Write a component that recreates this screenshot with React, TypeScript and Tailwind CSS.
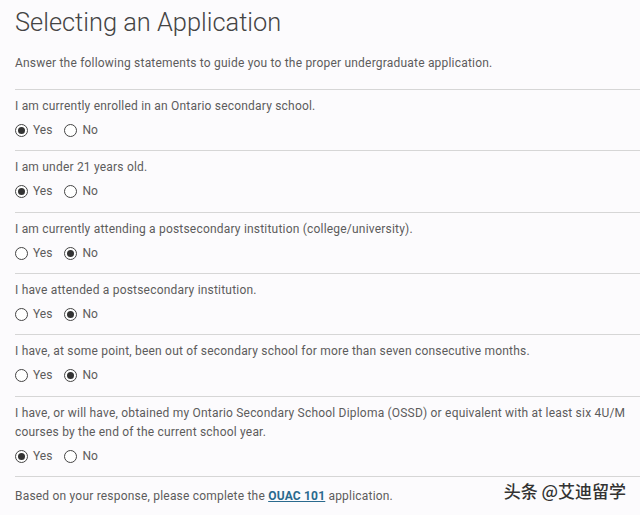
import React, { useState } from 'react'

interface Question {
  id: string
  lines: string[]
  answer: 'yes' | 'no'
  tall?: boolean
}

const QUESTIONS: Question[] = [
  { id: 'enrolled', lines: ['I am currently enrolled in an Ontario secondary school.'], answer: 'yes' },
  { id: 'age', lines: ['I am under 21 years old.'], answer: 'yes', tall: true },
  { id: 'attending', lines: ['I am currently attending a postsecondary institution (college/university).'], answer: 'no' },
  { id: 'attended', lines: ['I have attended a postsecondary institution.'], answer: 'no' },
  { id: 'outOfSchool', lines: ['I have, at some point, been out of secondary school for more than seven consecutive months.'], answer: 'no', tall: true },
  {
    id: 'ossd',
    lines: [
      'I have, or will have, obtained my Ontario Secondary School Diploma (OSSD) or equivalent with at least six 4U/M',
      'courses by the end of the current school year.',
    ],
    answer: 'yes',
  },
]

function Radio({ checked, label, onClick }: { checked: boolean; label: string; onClick: () => void }) {
  return (
    <button type="button" onClick={onClick} className="flex items-center gap-[5px] cursor-pointer">
      <span className="w-[13px] h-[13px] rounded-full border border-[#444] bg-white flex items-center justify-center">
        {checked && <span className="w-[7px] h-[7px] rounded-full bg-[#333]" />}
      </span>
      <span>{label}</span>
    </button>
  )
}

export default function App() {
  const [answers, setAnswers] = useState<Record<string, 'yes' | 'no'>>(
    Object.fromEntries(QUESTIONS.map((q) => [q.id, q.answer]))
  )

  return (
    <div
      className="relative w-[640px] h-[515px] overflow-hidden bg-[#fcfbfd] text-[#5c5c5c] text-[12px]"
      style={{ fontFamily: 'Roboto, "Liberation Sans", sans-serif' }}
    >
      {/* Header */}
      <div className="pl-[15px] pt-[7px]">
        <h1 className="text-[25.4px] leading-[30px] font-light text-[#444]">Selecting an Application</h1>
        <p className="mt-[17px] leading-[19px] tracking-[0.2px]">
          Answer the following statements to guide you to the proper undergraduate application.
        </p>
      </div>

      {/* Questions */}
      <div className="ml-[15px] mt-[16px]">
        {QUESTIONS.map((q) => (
          <div
            key={q.id}
            className={`border-t border-[#d6d6d6] pt-[7px] ${q.tall ? 'pb-[12px]' : 'pb-[11px]'}`}
          >
            {q.lines.map((line) => (
              <div key={line} className="leading-[19px] tracking-[0.2px]">{line}</div>
            ))}
            <div className="flex items-center gap-[12px] mt-[5px] h-[18px]">
              <Radio
                checked={answers[q.id] === 'yes'}
                label="Yes"
                onClick={() => setAnswers({ ...answers, [q.id]: 'yes' })}
              />
              <Radio
                checked={answers[q.id] === 'no'}
                label="No"
                onClick={() => setAnswers({ ...answers, [q.id]: 'no' })}
              />
            </div>
          </div>
        ))}
        <div className="border-t border-[#d6d6d6] pt-[10px] leading-[19px] tracking-[0.2px]">
          Based on your response, please complete the{' '}
          <a href="#" className="font-bold text-[#2a6a8e] underline">OUAC 101</a> application.
        </div>
      </div>

      {/* Watermark */}
      <div
        className="absolute right-[14px] top-[478px] text-[17px] font-medium text-[#333]"
        style={{ fontFamily: '"Noto Sans CJK SC", sans-serif', textShadow: '0 0 2px #fff, 0 0 2px #fff' }}
      >
        头条 @艾迪留学
      </div>
    </div>
  )
}
